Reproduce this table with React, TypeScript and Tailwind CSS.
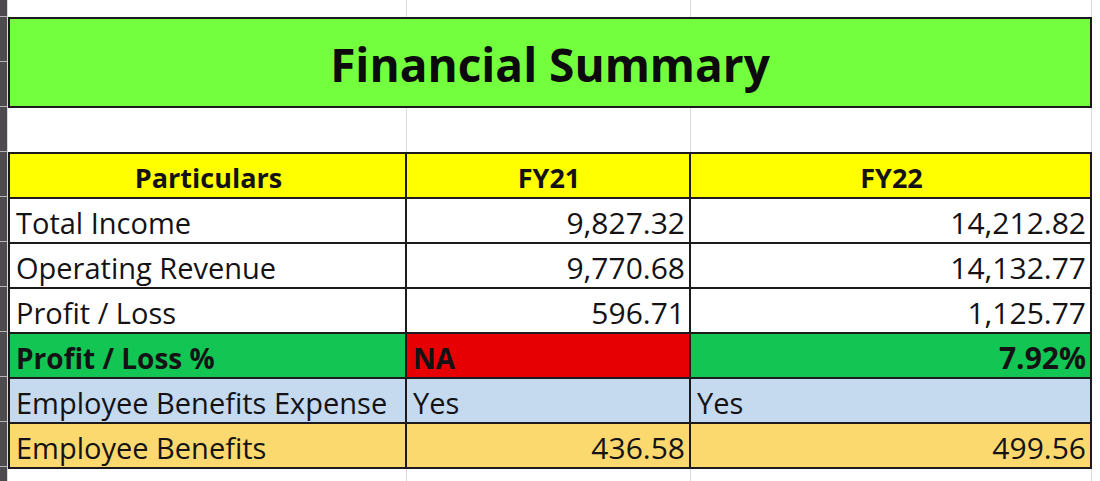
const font = { fontFamily: '"Open Sans", Lato, sans-serif' };

type Cell = { text: string; align: 'left' | 'right' | 'center'; bold?: boolean; bg?: string };
type Row = { bg: string; cells: Cell[] };

const rows: Row[] = [
  {
    bg: 'bg-white',
    cells: [
      { text: 'Total Income', align: 'left' },
      { text: '9,827.32', align: 'right' },
      { text: '14,212.82', align: 'right' },
    ],
  },
  {
    bg: 'bg-white',
    cells: [
      { text: 'Operating Revenue', align: 'left' },
      { text: '9,770.68', align: 'right' },
      { text: '14,132.77', align: 'right' },
    ],
  },
  {
    bg: 'bg-white',
    cells: [
      { text: 'Profit / Loss', align: 'left' },
      { text: '596.71', align: 'right' },
      { text: '1,125.77', align: 'right' },
    ],
  },
  {
    bg: 'bg-[#13c654]',
    cells: [
      { text: 'Profit / Loss %', align: 'left', bold: true },
      { text: 'NA', align: 'left', bold: true, bg: 'bg-[#e60003]' },
      { text: '7.92%', align: 'right', bold: true },
    ],
  },
  {
    bg: 'bg-[#c5d9ef]',
    cells: [
      { text: 'Employee Benefits Expense', align: 'left' },
      { text: 'Yes', align: 'left' },
      { text: 'Yes', align: 'left' },
    ],
  },
  {
    bg: 'bg-[#fbd96f]',
    cells: [
      { text: 'Employee Benefits', align: 'left' },
      { text: '436.58', align: 'right' },
      { text: '499.56', align: 'right' },
    ],
  },
];

const cols = 'grid grid-cols-[399px_284px_401px]';

function RowHead({ h }: { h: string }) {
  return <div className={`${h} shrink-0 bg-[#4d4b4d] border-b border-[#b5b3b5]`} />;
}

function BlankRow({ h }: { h: string }) {
  return (
    <div className={`${cols} ${h} shrink-0`}>
      <div className="border-r border-[#dcdcdc]" />
      <div className="border-r border-[#dcdcdc]" />
      <div className="border-r border-[#dcdcdc]" />
    </div>
  );
}

function sizeOf(c: Cell, header?: boolean) {
  if (header) return 'text-[27px]';
  if (c.align === 'right') return 'text-[30px]';
  if (c.bold) return 'text-[28px]';
  return 'text-[29px]';
}

function DataRow({ row, header }: { row: Row; header?: boolean }) {
  return (
    <div className={`${cols} h-[45px] shrink-0 ${row.bg}`}>
      {row.cells.map((c, i) => (
        <div
          key={i}
          className={`flex items-center overflow-hidden whitespace-nowrap border-b-2 border-r-2 border-[#1c1a1c] pl-[6px] pr-[4px] pt-[4px] leading-none text-[#141214] ${sizeOf(
            c,
            header,
          )} ${c.bold ? 'font-bold' : ''} ${c.bg ?? ''} ${i === 0 ? 'border-l-2' : ''} ${
            c.align === 'right' ? 'justify-end' : c.align === 'center' ? 'justify-center' : 'justify-start'
          }`}
        >
          {c.text}
        </div>
      ))}
    </div>
  );
}

export default function App() {
  return (
    <div className="flex h-[481px] w-[1100px] overflow-hidden bg-white" style={font}>
      <div className="flex w-[8px] shrink-0 flex-col border-r border-[#d8d8d8]">
        <RowHead h="h-[17px]" />
        <RowHead h="h-[45px]" />
        <RowHead h="h-[45px]" />
        <RowHead h="h-[45px]" />
        <RowHead h="h-[45px]" />
        {rows.map((_, i) => (
          <RowHead key={i} h="h-[45px]" />
        ))}
        <RowHead h="h-[45px]" />
        <div className="flex-1 bg-[#4d4b4d]" />
      </div>

      <div className="flex flex-col">
        <BlankRow h="h-[17px]" />
        <div className="flex h-[91px] w-[1084px] shrink-0 items-center justify-center border-2 border-[#1c1a1c] bg-[#74ff3e] pt-[3px] text-[46px] font-bold text-[#0c0a0c]">
          Financial Summary
        </div>
        <BlankRow h="h-[44px]" />
        <div className="shrink-0 border-t-2 border-[#1c1a1c]">
          <DataRow
            header
            row={{
              bg: 'bg-[#ffff00]',
              cells: [
                { text: 'Particulars', align: 'center', bold: true },
                { text: 'FY21', align: 'center', bold: true },
                { text: 'FY22', align: 'center', bold: true },
              ],
            }}
          />
          {rows.map((r, i) => (
            <DataRow key={i} row={r} />
          ))}
        </div>
        <BlankRow h="h-[20px]" />
      </div>
    </div>
  );
}
